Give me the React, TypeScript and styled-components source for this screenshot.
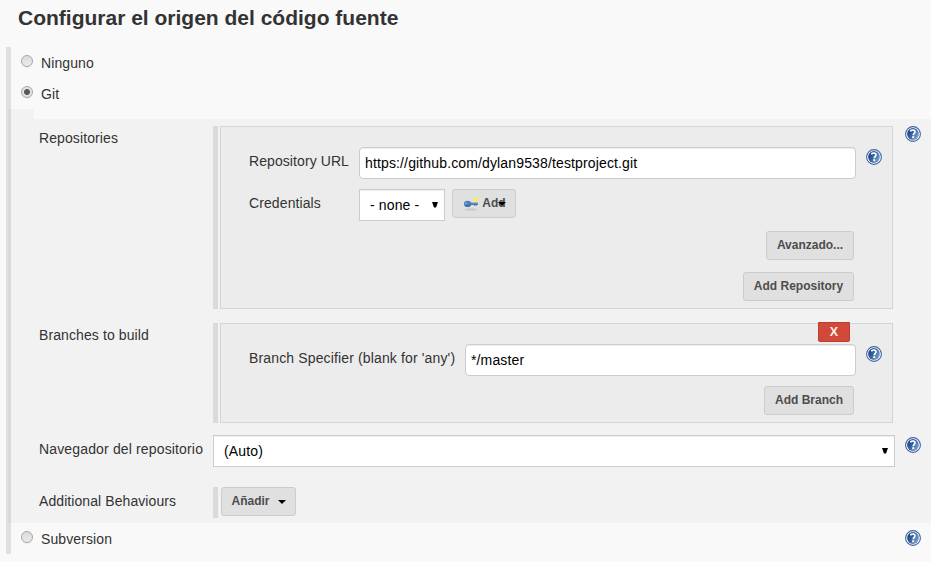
import React from "react";
import styled, { createGlobalStyle } from "styled-components";

const GlobalStyle = createGlobalStyle`
  *, *::before, *::after { box-sizing: border-box; }
  body {
    margin: 0;
    background: #f9f9f9;
    color: #333;
    font: 14px/20px "Liberation Sans", Arial, sans-serif;
  }
  button, input { font-family: inherit; margin: 0; }
`;

const Page = styled.main`
  width: 931px;
  height: 562px;
  overflow: hidden;
`;

const Heading = styled.h1`
  margin: 0;
  height: 47px;
  padding: 5px 0 0 18px;
  font-size: 21px;
  line-height: 26px;
  white-space: nowrap;
`;

const Section = styled.section`
  margin-left: 6px;
  height: 507px;
  border-left: 5px solid #e0e0e0;
`;

const Choice = styled.div`
  display: flex;
  height: 31px;
  padding: 7px 10px 0;
`;

const Radio = styled.span<{ $checked?: boolean }>`
  width: 12px;
  height: 12px;
  margin-top: 1px;
  border: 1px solid #a6a6a6;
  border-radius: 50%;
  background: ${(p) =>
    p.$checked
      ? "radial-gradient(circle, #5a5a5a 0 2.6px, #e4e4e4 3.4px)"
      : "linear-gradient(#dadada, #ececec)"};
  box-shadow: 0 1px 0 #ececec;
`;

const ChoiceText = styled.span`
  margin: -1px auto 0 8px;
  height: 20px;
  letter-spacing: 0.1px;
`;

const Notch = styled.div`
  width: 26px;
  height: 10px;
  margin-left: -3px;
  border-left: 3px solid #d9d9d9;
  background: #f2f2f2;
`;

const Config = styled.div`
  display: grid;
  grid-template-rows: 197px 112px 52px 36px;
  height: 404px;
  margin-left: -3px;
  padding: 7px 10px 0 28px;
  border-left: 3px solid #d9d9d9;
  background: #f2f2f2;
`;

const ConfigRow = styled.div`
  display: grid;
  grid-template-columns: 174px 682px 16px;
  justify-content: start;
  align-items: start;

  > :last-child:nth-child(3) {
    margin-left: 10px;
  }
`;

const Label = styled.span<{ $top?: number; $spacing?: number }>`
  padding-top: ${(p) => p.$top ?? 0}px;
  white-space: nowrap;
  letter-spacing: ${(p) => p.$spacing ?? 0}px;
`;

const Group = styled.div<{ $height: number }>`
  display: flex;
  height: ${(p) => p.$height}px;
  border-left: 5px solid #dadada;
  padding-left: 2px;
`;

const Panel = styled.div<{ $tight?: boolean }>`
  width: 673px;
  border: 1px solid #d5d5d5;
  background: #ececec;
  padding: ${(p) => (p.$tight ? 0 : 20)}px 10px 0 28px;
`;

const Field = styled.div<{ $label: number }>`
  display: grid;
  grid-template-columns: ${(p) => p.$label}px 1fr 16px;
  column-gap: 10px;
  align-items: start;
  margin-bottom: 10px;
`;

const CredentialsRow = styled.div`
  display: grid;
  grid-template-columns: 110px 86px auto;
  justify-content: start;
  align-items: start;
  margin-bottom: 10px;
`;

const TextInput = styled.input`
  width: 100%;
  height: 32px;
  padding: 0 5px;
  border: 1px solid #ccc;
  border-radius: 4px;
  background: #fff;
  color: #000;
  font-size: 14px;
  letter-spacing: 0.14px;
  outline: none;
  box-shadow: inset 0 1px 1px #eee;
`;

const SelectBox = styled.div`
  display: flex;
  align-items: center;
  justify-content: space-between;
  height: 32px;
  padding: 0 6px 0 10px;
  border: 1px solid #ccc;
  background: #fff;
  color: #000;
  letter-spacing: 0.14px;
  box-shadow: inset 0 1px 1px #eee;
`;

const Button = styled.button<{ $width: number }>`
  display: flex;
  align-items: center;
  justify-content: center;
  width: ${(p) => p.$width}px;
  height: 29px;
  padding: 0 0 1px;
  border: 1px solid #ccc;
  border-radius: 3px;
  background: #e0e0e0;
  color: #4d4d4d;
  font-size: 12px;
  font-weight: 700;
  white-space: nowrap;
`;

const AddButton = styled(Button)`
  justify-content: flex-start;
  margin-left: 7px;
  padding-left: 10px;
`;

const MenuButton = styled(Button)`
  margin-left: 1px;
  gap: 8px;
`;

const Actions = styled.div`
  display: flex;
  flex-direction: column;
  align-items: flex-end;
  gap: 12px;
  padding-right: 28px;
`;

const DeleteRow = styled.div`
  display: flex;
  justify-content: flex-end;
  height: 20px;
  margin: -2px 0 2px;
  padding-right: 32px;
`;

const DeleteButton = styled.button`
  width: 32px;
  height: 20px;
  padding: 0;
  border: 1px solid #c23b2b;
  border-radius: 0 0 2px 2px;
  background: #d24939;
  color: #f9f1f0;
  font-size: 12.5px;
  line-height: 18px;
  font-weight: 700;
`;

const Icon = styled.svg<{ $top?: number; $left?: number }>`
  display: block;
  flex: none;
  margin-top: ${(p) => p.$top ?? 0}px;
  margin-left: ${(p) => p.$left ?? 0}px;
`;

function Help({ top }: { top?: number }) {
  return (
    <Icon $top={top} width="16" height="16" viewBox="0 0 16 16">
      <defs>
        <linearGradient id="helpBlue" x1="0" y1="0.2" x2="1" y2="0.8">
          <stop offset="0.15" stopColor="#204a87" />
          <stop offset="0.5" stopColor="#3f69a5" />
          <stop offset="1" stopColor="#8aabd4" />
        </linearGradient>
      </defs>
      <circle cx="8" cy="8" r="7.4" fill="#fff" stroke="#3c65a4" strokeWidth="1.1" />
      <circle cx="8" cy="8" r="5.9" fill="url(#helpBlue)" />
      <path
        d="M5.9 5.6V4.5C7.2 3.7 10 3.8 10 5.8C10 7.2 8.3 7.5 8.3 9.3"
        fill="none"
        stroke="#fff"
        strokeWidth="1.7"
      />
      <rect x="7.2" y="10.2" width="2" height="2" fill="#fff" />
    </Icon>
  );
}

function SelectArrow() {
  return (
    <Icon width="6" height="6" viewBox="0 0 6 6">
      <path d="M0 0H6L4 5.5H2Z" fill="#000" />
    </Icon>
  );
}

function MenuArrow({ left }: { left?: number }) {
  return (
    <Icon $left={left} $top={2} width="8" height="4" viewBox="0 0 8 4">
      <path d="M0 0H8L4 4Z" fill="#000" />
    </Icon>
  );
}

function KeyIcon() {
  return (
    <Icon $top={1} width="16" height="16" viewBox="0 0 16 16">
      <ellipse cx="8" cy="13.5" rx="6" ry="0.9" fill="#c6c6c6" />
      <path d="M7 6.4H15V8.7H14V9.8H11V8.7H7Z" fill="#6b95c8" />
      <path d="M6 7.8H14.5V8.8H6Z" fill="#3e6ba6" />
      <ellipse cx="4.6" cy="7.9" rx="3.7" ry="3.1" fill="#4f80bb" />
      <path d="M2 9.3C3.5 11.4 6.5 11.3 8 8.8Z" fill="#3d69a4" />
      <circle cx="3" cy="7.3" r="0.8" fill="#a9c3e2" />
      <circle cx="12.5" cy="3.7" r="2.2" fill="#f6ec46" />
      <circle cx="12.5" cy="3.7" r="0.9" fill="#fdf9a8" />
    </Icon>
  );
}

export default function App() {
  return (
    <>
      <GlobalStyle />
      <Page>
        <Heading>Configurar el origen del código fuente</Heading>
        <Section>
          <Choice>
            <Radio />
            <ChoiceText>Ninguno</ChoiceText>
          </Choice>
          <Choice>
            <Radio $checked />
            <ChoiceText>Git</ChoiceText>
          </Choice>
          <Notch />
          <Config>
            <ConfigRow>
              <Label $top={2} $spacing={0.1}>Repositories</Label>
              <Group $height={183}>
                <Panel>
                  <Field $label={100}>
                    <Label $top={4} $spacing={0.08}>Repository URL</Label>
                    <TextInput defaultValue="https://github.com/dylan9538/testproject.git" />
                    <Help top={2} />
                  </Field>
                  <CredentialsRow>
                    <Label $top={4} $spacing={0.1}>Credentials</Label>
                    <SelectBox>
                      - none - <SelectArrow />
                    </SelectBox>
                    <AddButton $width={64}>
                      <KeyIcon />
                      <Label>&nbsp;Add</Label>
                      <MenuArrow left={-8} />
                    </AddButton>
                  </CredentialsRow>
                  <Actions>
                    <Button $width={88}>Avanzado...</Button>
                    <Button $width={111}>Add Repository</Button>
                  </Actions>
                </Panel>
              </Group>
              <Help />
            </ConfigRow>
            <ConfigRow>
              <Label $top={2} $spacing={0.1}>Branches to build</Label>
              <Group $height={100}>
                <Panel $tight>
                  <DeleteRow>
                    <DeleteButton>X</DeleteButton>
                  </DeleteRow>
                  <Field $label={206}>
                    <Label $top={4} $spacing={0.14}>Branch Specifier (blank for 'any')</Label>
                    <TextInput defaultValue="*/master" />
                    <Help top={2} />
                  </Field>
                  <Actions>
                    <Button $width={90}>Add Branch</Button>
                  </Actions>
                </Panel>
              </Group>
            </ConfigRow>
            <ConfigRow>
              <Label $top={4} $spacing={0.15}>Navegador del repositorio</Label>
              <SelectBox>
                (Auto) <SelectArrow />
              </SelectBox>
              <Help top={2} />
            </ConfigRow>
            <ConfigRow>
              <Label $top={4} $spacing={0.08}>Additional Behaviours</Label>
              <Group $height={31}>
                <MenuButton $width={75}>
                  Añadir <MenuArrow />
                </MenuButton>
              </Group>
            </ConfigRow>
          </Config>
          <Choice>
            <Radio />
            <ChoiceText>Subversion</ChoiceText>
            <Help />
          </Choice>
        </Section>
      </Page>
    </>
  );
}
